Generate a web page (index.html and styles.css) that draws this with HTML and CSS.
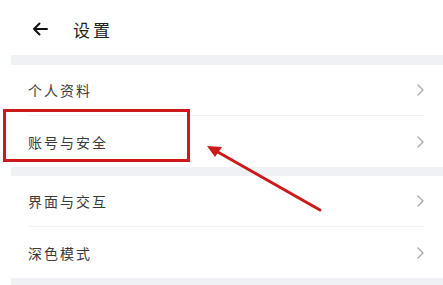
FILE: index.html
```html
<!DOCTYPE html>
<html lang="zh-CN">
<head>
<meta charset="utf-8">
<title>设置</title>
<link rel="stylesheet" href="styles.css">
</head>
<body>
<div class="page">
  <header class="header">
    <svg class="back" width="16" height="14" viewBox="0 0 16 14" aria-hidden="true">
      <path d="M15 7H2M7.5 1.5L2 7l5.5 5.5" fill="none" stroke="#111" stroke-width="2" stroke-linecap="round" stroke-linejoin="round"/>
    </svg>
    <h1 class="title">设置</h1>
  </header>
  <div class="band"></div>
  <ul class="group">
    <li class="row"><span class="label">个人资料</span><svg class="chev" width="7" height="12" viewBox="0 0 7 12" aria-hidden="true"><path d="M1 1l5 5-5 5" fill="none" stroke="#aaa" stroke-width="1.4" stroke-linecap="round" stroke-linejoin="round"/></svg></li>
    <li class="row"><span class="label">账号与安全</span><svg class="chev" width="7" height="12" viewBox="0 0 7 12" aria-hidden="true"><path d="M1 1l5 5-5 5" fill="none" stroke="#aaa" stroke-width="1.4" stroke-linecap="round" stroke-linejoin="round"/></svg></li>
  </ul>
  <div class="band band-mid"></div>
  <ul class="group">
    <li class="row"><span class="label">界面与交互</span><svg class="chev" width="7" height="12" viewBox="0 0 7 12" aria-hidden="true"><path d="M1 1l5 5-5 5" fill="none" stroke="#aaa" stroke-width="1.4" stroke-linecap="round" stroke-linejoin="round"/></svg></li>
    <li class="row"><span class="label">深色模式</span><svg class="chev" width="7" height="12" viewBox="0 0 7 12" aria-hidden="true"><path d="M1 1l5 5-5 5" fill="none" stroke="#aaa" stroke-width="1.4" stroke-linecap="round" stroke-linejoin="round"/></svg></li>
  </ul>
  <div class="band band-end"></div>

  <div class="highlight"></div>
  <svg class="pointer" width="443" height="285" viewBox="0 0 443 285" aria-hidden="true">
    <line x1="320" y1="210" x2="216" y2="151" stroke="#cc1a1a" stroke-width="3" stroke-linecap="round"/>
    <polygon points="207,146 222,147 215,157" fill="#cc1a1a"/>
  </svg>
</div>
</body>
</html>
```
FILE: styles.css
```css
* { box-sizing: border-box; }
html, body { margin: 0; padding: 0; background: #fff; }
body {
  font-family: "Noto Sans CJK SC", "Noto Sans", sans-serif;
  color: #333;
}
.page {
  position: relative;
  width: 443px;
  height: 285px;
  overflow: hidden;
}
.header {
  height: 55px;
  display: flex;
  align-items: center;
  padding-left: 32px;
  padding-top: 3px;
}
.back { display: block; }
.title {
  margin: 0 0 0 25px;
  font-size: 17px;
  font-weight: 400;
  letter-spacing: 3px;
  color: #222;
}
.band {
  margin-left: 11px;
  height: 10px;
  background: #f0f1f5;
}
.band-mid { height: 9px; }
.band-end { height: 10px; }
.group {
  list-style: none;
  margin: 0 0 0 11px;
  padding: 0;
}
.row {
  height: 51px;
  display: flex;
  align-items: center;
  justify-content: space-between;
  margin: 0 19px 0 17px;
  border-bottom: 1px solid #f1f1f1;
}
.row:last-child { border-bottom: none; }
.label {
  font-size: 14px;
  letter-spacing: 2px;
  color: #3a3a3a;
}
.chev {
  display: block;
  margin-right: 0;
}
.highlight {
  position: absolute;
  left: 3px;
  top: 109px;
  width: 187px;
  height: 53px;
  border: 3px solid #cc1a1a;
}
.pointer {
  position: absolute;
  left: 0;
  top: 0;
}
```
